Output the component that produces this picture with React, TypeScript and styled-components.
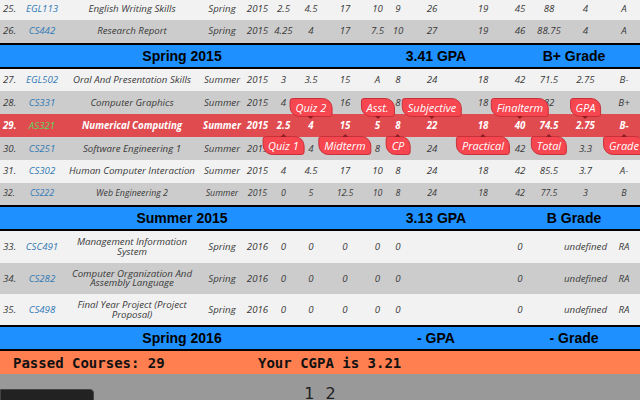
import React from "react";
import styled, { createGlobalStyle, css } from "styled-components";

const GlobalStyle = createGlobalStyle`
  html, body { margin: 0; padding: 0; overflow: hidden; background: #999999; }
  body { font-family: "Open Sans", "Liberation Sans", sans-serif; }
`;

const COLS =
  "22px 40px 140px 40px 31px 21px 34px 34px 31px 10px 58px 44px 30px 28px 45px 1fr";

type Tone = "light" | "gray" | "hot";

const Page = styled.div`
  margin-top: -3px;
  width: 640px;
`;

const Row = styled.div<{ $tone: Tone; $tall?: boolean; $small?: boolean }>`
  display: grid;
  grid-template-columns: ${COLS};
  align-items: stretch;
  min-height: ${(p) => (p.$tall ? "31.3px" : "22.8px")};
  background: ${(p) =>
    p.$tone === "gray" ? "#cccccc" : p.$tone === "hot" ? "#e04b50" : "#f2f2f2"};
  color: ${(p) => (p.$tone === "hot" ? "#ffffff" : "#3a3a3a")};
  font-style: italic;
  font-weight: ${(p) => (p.$tone === "hot" ? 700 : 400)};
  font-size: ${(p) => (p.$small ? "8.8px" : "9.7px")};
  line-height: 9.6px;
  position: relative;
  z-index: ${(p) => (p.$tone === "hot" ? 2 : 1)};
`;

const Cell = styled.div<{ $left?: boolean; $pad?: number }>`
  position: relative;
  display: flex;
  align-items: center;
  justify-content: ${(p) => (p.$left ? "flex-start" : "center")};
  text-align: center;
  padding: 0 ${(p) => p.$pad ?? 0}px 0 ${(p) => (p.$left ? 3 : p.$pad ?? 0)}px;
  white-space: ${(p) => (p.$pad ? "normal" : "nowrap")};
`;

const Code = styled.span<{ $hot?: boolean }>`
  color: ${(p) => (p.$hot ? "#5cd65c" : "#337ab7")};
  font-weight: 400;
`;

const Badge = styled.span<{ $side: "top" | "bottom" }>`
  position: absolute;
  left: 50%;
  transform: translateX(-50%);
  ${(p) =>
    p.$side === "top"
      ? css`
          bottom: calc(100% - 3px);
        `
      : css`
          top: calc(100% - 0.5px);
        `}
  height: 19px;
  padding: 0 5px;
  box-sizing: border-box;
  display: flex;
  align-items: center;
  background: #f6464f;
  border: 1px solid #c9313a;
  border-radius: 3px 10px 3px 10px;
  color: #ffffff;
  font-family: "Open Sans", sans-serif;
  font-style: italic;
  font-weight: 400;
  font-size: 11px;
  white-space: nowrap;
  z-index: 5;
  &::after {
    content: "";
    position: absolute;
    left: 50%;
    margin-left: -3px;
    border-left: 3px solid transparent;
    border-right: 3px solid transparent;
    ${(p) =>
      p.$side === "top"
        ? css`
            top: 100%;
            border-top: 3px solid #8e1c22;
          `
        : css`
            bottom: 100%;
            border-bottom: 3px solid #8e1c22;
          `}
  }
`;

const TermBar = styled.div`
  display: grid;
  grid-template-columns: 364px 144px 1fr;
  height: 22px;
  background: #1e90ff;
  border-top: 2px solid #000;
  border-bottom: 2px solid #000;
  font-family: "Liberation Sans", Arial, sans-serif;
  font-weight: 700;
  font-size: 14px;
  color: #000;
  position: relative;
  z-index: 1;
`;

const TermCell = styled.div`
  display: flex;
  align-items: center;
  justify-content: center;
`;

const Summary = styled.div`
  display: grid;
  grid-template-columns: 245px 1fr;
  align-items: center;
  height: 23px;
  padding-left: 13px;
  background: #ff7f50;
  color: #111;
  font-family: "DejaVu Sans Mono", "Liberation Mono", monospace;
  font-weight: 700;
  font-size: 14px;
`;

const Footer = styled.div`
  display: grid;
  grid-template-columns: 1fr auto 1fr;
  align-items: start;
  height: 40px;
  background: #999999;
`;

const BackButton = styled.div`
  margin-top: 15px;
  width: 94px;
  height: 24px;
  background: #222222;
  border: 1px solid #444;
  box-sizing: border-box;
  border-radius: 0 4px 0 0;
`;

const Pager = styled.div`
  margin-top: 10px;
  display: flex;
  gap: 11px;
  font-family: "DejaVu Sans", "Liberation Sans", sans-serif;
  font-size: 16px;
  color: #222;
`;

type RowData = {
  cells: string[];
  tone: Tone;
  tall?: boolean;
  small?: boolean;
};

const rows1: RowData[] = [
  { tone: "light", cells: ["25.", "EGL113", "English Writing Skills", "Spring", "2015", "2.5", "4.5", "17", "10", "9", "26", "19", "45", "88", "4", "A"] },
  { tone: "gray", cells: ["26.", "CS442", "Research Report", "Spring", "2015", "4.25", "4", "17", "7.5", "10", "27", "19", "46", "88.75", "4", "A"] },
];

const rows2: RowData[] = [
  { tone: "light", cells: ["27.", "EGL502", "Oral And Presentation Skills", "Summer", "2015", "3", "3.5", "15", "A", "8", "24", "18", "42", "71.5", "2.75", "B-"] },
  { tone: "gray", cells: ["28.", "CS331", "Computer Graphics", "Summer", "2015", "4", "", "16", "", "8", "", "18", "", "82", "", "B+"] },
  { tone: "hot", cells: ["29.", "AS321", "Numerical Computing", "Summer", "2015", "2.5", "4", "15", "5", "8", "22", "18", "40", "74.5", "2.75", "B-"] },
  { tone: "gray", cells: ["30.", "CS251", "Software Engineering 1", "Summer", "2015", "", "4", "", "8", "", "24", "", "42", "", "3.3", ""] },
  { tone: "light", cells: ["31.", "CS302", "Human Computer Interaction", "Summer", "2015", "4", "4.5", "17", "10", "8", "24", "18", "42", "85.5", "3.7", "A-"] },
  { tone: "gray", small: true, cells: ["32.", "CS222", "Web Engineering 2", "Summer", "2015", "0", "5", "12.5", "10", "8", "24", "18", "42", "77.5", "3", "B"] },
];

const rows3: RowData[] = [
  { tone: "light", tall: true, cells: ["33.", "CSC491", "Management Information System", "Spring", "2016", "0", "0", "0", "0", "0", "", "", "0", "", "undefined", "RA"] },
  { tone: "gray", tall: true, cells: ["34.", "CS282", "Computer Organization And Assembly Language", "Spring", "2016", "0", "0", "0", "0", "0", "", "", "0", "", "undefined", "RA"] },
  { tone: "light", tall: true, cells: ["35.", "CS498", "Final Year Project (Project Proposal)", "Spring", "2016", "0", "0", "0", "0", "0", "", "", "0", "", "undefined", "RA"] },
];

const badges: Record<number, { label: string; side: "top" | "bottom" }> = {
  5: { label: "Quiz 1", side: "bottom" },
  6: { label: "Quiz 2", side: "top" },
  7: { label: "Midterm", side: "bottom" },
  8: { label: "Asst.", side: "top" },
  9: { label: "CP", side: "bottom" },
  10: { label: "Subjective", side: "top" },
  11: { label: "Practical", side: "bottom" },
  12: { label: "Finalterm", side: "top" },
  13: { label: "Total", side: "bottom" },
  14: { label: "GPA", side: "top" },
  15: { label: "Grade", side: "bottom" },
};

function CourseRow({ row }: { row: RowData }) {
  const hot = row.tone === "hot";
  return (
    <Row $tone={row.tone} $tall={row.tall} $small={row.small}>
      {row.cells.map((c, i) => {
        const b = hot ? badges[i] : undefined;
        return (
          <Cell key={i} $left={i === 0} $pad={i === 2 ? 5 : undefined}>
            {i === 1 ? <Code $hot={hot}>{c}</Code> : c}
            {b && <Badge $side={b.side}>{b.label}</Badge>}
          </Cell>
        );
      })}
    </Row>
  );
}

function Term({ name, gpa, grade }: { name: string; gpa: string; grade: string }) {
  return (
    <TermBar>
      <TermCell>{name}</TermCell>
      <TermCell>{gpa} GPA</TermCell>
      <TermCell>{grade} Grade</TermCell>
    </TermBar>
  );
}

export default function App() {
  return (
    <>
      <GlobalStyle />
      <Page>
        {rows1.map((r, i) => (
          <CourseRow key={i} row={r} />
        ))}
        <Term name="Spring 2015" gpa="3.41" grade="B+" />
        {rows2.map((r, i) => (
          <CourseRow key={i} row={r} />
        ))}
        <Term name="Summer 2015" gpa="3.13" grade="B" />
        {rows3.map((r, i) => (
          <CourseRow key={i} row={r} />
        ))}
        <Term name="Spring 2016" gpa="-" grade="-" />
        <Summary>
          <span>Passed Courses: 29</span>
          <span>Your CGPA is 3.21</span>
        </Summary>
        <Footer>
          <BackButton />
          <Pager>
            <span>1</span>
            <span>2</span>
          </Pager>
          <span />
        </Footer>
      </Page>
    </>
  );
}
